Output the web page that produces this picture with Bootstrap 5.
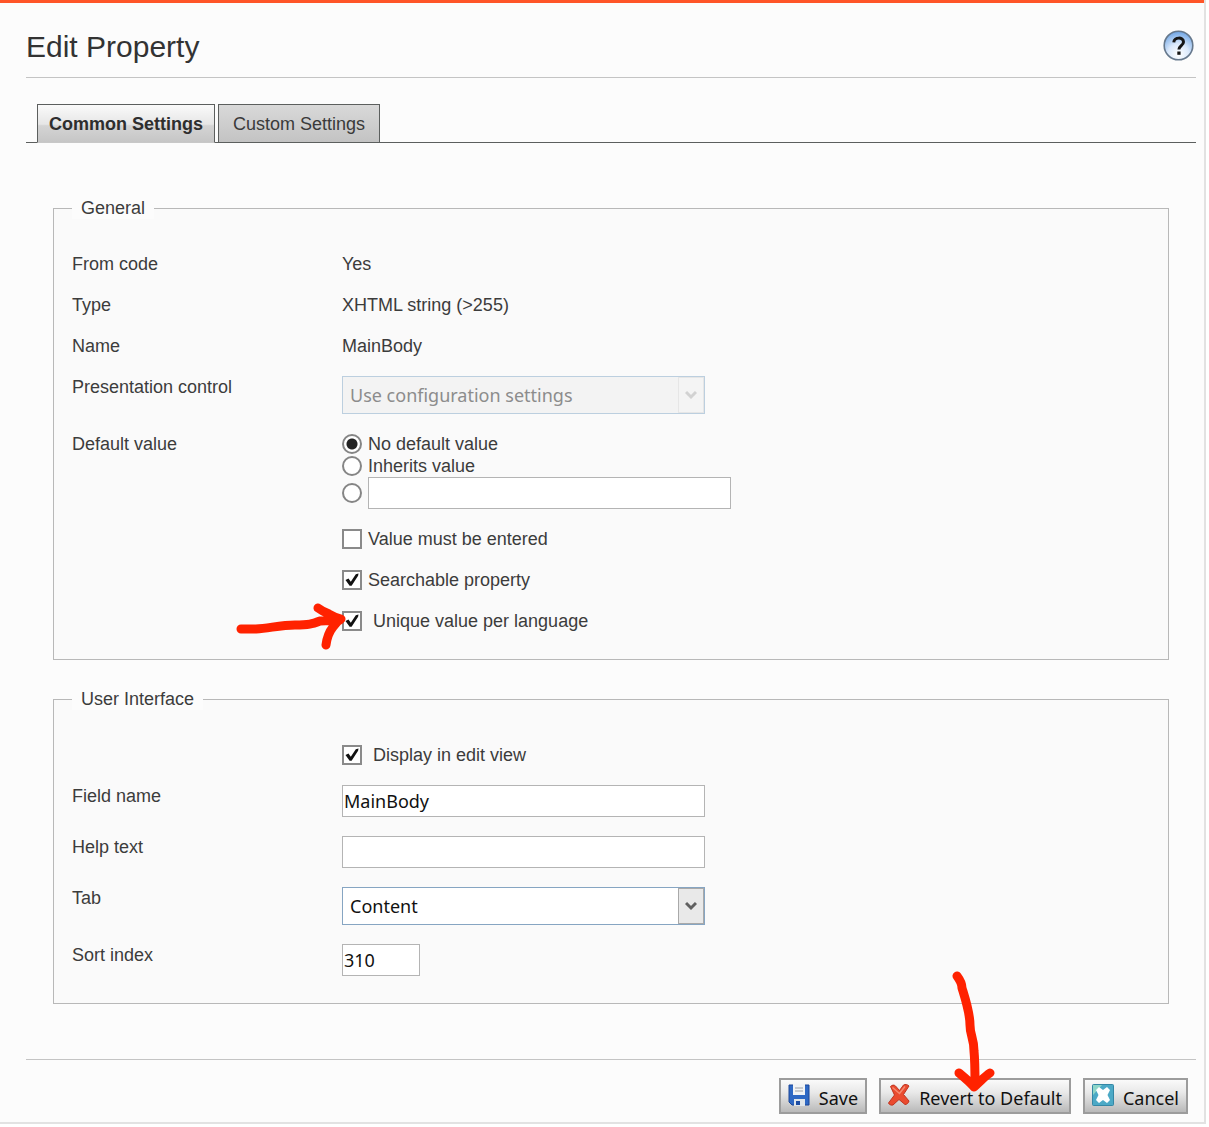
<!DOCTYPE html>
<html lang="en">
<head>
<meta charset="utf-8">
<meta name="viewport" content="width=device-width, initial-scale=1">
<title>Edit Property</title>
<link href="https://cdn.jsdelivr.net/npm/bootstrap@5.3.0/dist/css/bootstrap.min.css" rel="stylesheet">
<style>
  body { font-family: "Liberation Sans", Arial, sans-serif; font-size: 18px; line-height: 22px; color: #3c3c3c; background: #fff; }
  .dialog-panel { background: #fcfcfc; border: solid #e2e2e2; border-width: 0 2px 2px 0; margin-right: 3px; }
  .accent-bar { height: 3px; background: #ff5528; }
  .dialog-body { padding: 0 8px 8px 26px; }
  .dialog-head { padding: 26px 2px 13px 0; height: 75px; border-bottom: 1px solid #c4c4c4; }
  .dialog-title { font-size: 30px; line-height: 36px; font-weight: 400; color: #333; }
  .help-btn { line-height: 0; padding: 1px 0 0; }
  .prop-tabs { margin-top: 26px; padding-left: 11px; gap: 3px; border-bottom: 1px solid #5c5f5e; }
  .prop-tabs .nav-link { border: 1px solid #5c5f5e; border-radius: 0; margin-bottom: -1px; height: 39px; padding: 8px 14px; color: #3a3a3a; background: linear-gradient(#d9d9d9, #c3c3c3); }
  .prop-tabs .nav-link.active { padding: 8px 11px; border-bottom-color: #c8c8c8; font-weight: 700; color: #2e2e2e; background: linear-gradient(#fafafa, #e6e6e6 52%, #d4d4d4 56%, #c6c6c6); }
  .prop-groups { padding: 54px 27px 55px; display: grid; gap: 28px; }
  .prop-set { background: #fafafa; border: 1px solid #b8b8b8; padding: 34px 18px 27px; }
  .prop-legend { float: none; width: auto; font-size: 18px; line-height: 22px; padding: 0 9px; margin: 0; background: #fcfcfc; }
  .prop-rows { display: grid; grid-template-columns: 270px minmax(0, 1fr); row-gap: 19px; }
  .prop-value { grid-column: 2; }
  .choice { display: flex; align-items: center; gap: 6px; width: fit-content; position: relative; }
  .choice-wide { gap: 11px; }
  .tick { appearance: none; width: 20px; height: 20px; margin: 0; border: 2px solid #8a8a8a; background: #fff center / 16px 16px no-repeat; }
  .tick:checked { background-image: url("data:image/svg+xml,%3Csvg xmlns='http://www.w3.org/2000/svg' viewBox='0 0 16 16'%3E%3Cpath d='M1.500 8 4.500 6.500l2.300 3.200L11.800 2.200l2.700-.6-.4 2.200L7.600 13.800H5.600z' fill='%23111'/%3E%3C/svg%3E"); }
  .dot { appearance: none; width: 20px; height: 20px; margin: 0; border: 2px solid #858585; border-radius: 50%; background: #fff; }
  .dot:checked { background: radial-gradient(circle, #222 5px, #fff 6px); }
  .field { width: 363px; max-width: 100%; height: 32px; padding: 0 1px; border: 1px solid #b4b4b4; border-radius: 0; background: #fff; }
  .field, .picker, .cmd { font-family: "Noto Sans", sans-serif; font-size: 18px; line-height: 24px; color: #111; }
  .field-short { width: 78px; }
  .picker-wrap { position: relative; width: 363px; max-width: 100%; }
  .picker { appearance: none; width: 100%; height: 38px; padding: 0 30px 0 7px; border: 1px solid #86a5c2; border-radius: 0; background: #fff; }
  .picker:disabled { color: #8c8c8c; background: #f3f3f3; border-color: #bccfdf; opacity: 1; }
  .picker-arrow { position: absolute; top: 1px; right: 1px; bottom: 1px; width: 26px; display: grid; place-items: center; border: 1px solid #a9a9a9; background: #e9e9e9; color: #606060; pointer-events: none; }
  .picker:disabled + .picker-arrow { border-color: #e6e6e6; background: #f4f4f4; color: #d2d2d2; }
  .cmd-bar { border-top: 1px solid #c4c4c4; padding: 18px 8px 0 0; }
  .cmd-group { gap: 12px; }
  .cmd { display: flex; align-items: center; gap: 9px; height: 36px; padding: 3px 7px 0; border: 2px solid #9c9c9c; background: linear-gradient(#fafafa, #e8e8e8 40%, #b9b9b9); position: relative; }
  .cmd svg.glyph { margin-top: -5px; }
  .pen { position: absolute; overflow: visible; fill: none; stroke: #ff2200; stroke-width: 9; stroke-linecap: round; stroke-linejoin: round; pointer-events: none; z-index: 2; }
  .pen-tick { right: 100%; top: 0; width: 104px; height: 40px; }
  .pen-cmd { left: 71px; bottom: 18px; width: 46px; height: 120px; }
</style>
</head>
<body>
<main class="dialog-panel">
  <div class="accent-bar"></div>
  <div class="dialog-body">
    <header class="dialog-head d-flex justify-content-between align-items-start">
      <h1 class="dialog-title m-0">Edit Property</h1>
      <button type="button" class="help-btn border-0 bg-transparent" aria-label="Help">
        <svg width="31" height="31" viewBox="0 0 31 31" aria-hidden="true">
          <defs><radialGradient id="orb" cx=".5" cy=".8" r=".8"><stop offset="0" stop-color="#fff"/><stop offset=".45" stop-color="#dbe9fb"/><stop offset="1" stop-color="#6ca3e4"/></radialGradient></defs>
          <circle cx="15.500" cy="15.500" r="14.300" fill="url(#orb)" stroke="#66788c" stroke-width="1.600"/>
          <path d="M10.800 12.300c.3-5.600 9.700-5.400 9.700-.4 0 3.600-4.600 3.700-4.600 7.600" fill="none" stroke="#161616" stroke-width="3"/>
          <rect x="14.300" y="21.500" width="3.300" height="3.300" fill="#161616"/>
        </svg>
      </button>
    </header>

    <ul class="nav prop-tabs" role="tablist">
      <li class="nav-item"><a class="nav-link active" href="#common" role="tab" aria-selected="true">Common Settings</a></li>
      <li class="nav-item"><a class="nav-link" href="#custom" role="tab" aria-selected="false">Custom Settings</a></li>
    </ul>

    <form id="common">
      <div class="prop-groups">
        <fieldset class="prop-set">
          <legend class="prop-legend">General</legend>
          <div class="prop-rows">
            <div>From code</div><div>Yes</div>
            <div>Type</div><div>XHTML string (&gt;255)</div>
            <div>Name</div><div>MainBody</div>
            <label for="presentation">Presentation control</label>
            <div class="picker-wrap">
              <select id="presentation" class="picker" disabled><option>Use configuration settings</option></select>
              <span class="picker-arrow"><svg width="12" height="10" viewBox="0 0 12 10"><path d="M1 2l5 5 5-5" fill="none" stroke="currentColor" stroke-width="3"/></svg></span>
            </div>
            <div>Default value</div>
            <div>
              <label class="choice"><input class="dot" type="radio" name="default" checked>No default value</label>
              <label class="choice"><input class="dot" type="radio" name="default">Inherits value</label>
              <div class="choice">
                <input class="dot" type="radio" name="default" aria-label="Custom default value">
                <input class="field" type="text" aria-label="Default value text">
              </div>
            </div>
            <label class="prop-value choice"><input class="tick" type="checkbox">Value must be entered</label>
            <label class="prop-value choice"><input class="tick" type="checkbox" checked>Searchable property</label>
            <label class="prop-value choice choice-wide"><input class="tick" type="checkbox" checked>Unique value per language
              <svg class="pen pen-tick" viewBox="0 0 104 40" aria-hidden="true"><path d="M3 19h15c14-1 25-4 39-4 14 0 17-1 25-4 8-1 14 0 20-1M80-2c4 3 6 4 11 6 5 3 8 4 12 5-4 2-6 5-8 8-4 5-6 10-7 18"/></svg>
            </label>
          </div>
        </fieldset>

        <fieldset class="prop-set">
          <legend class="prop-legend">User Interface</legend>
          <div class="prop-rows">
            <label class="prop-value choice choice-wide"><input class="tick" type="checkbox" checked>Display in edit view</label>
            <label for="field-name">Field name</label>
            <input id="field-name" class="field" type="text" value="MainBody">
            <label for="help-text">Help text</label>
            <input id="help-text" class="field" type="text">
            <label for="tab-choice">Tab</label>
            <div class="picker-wrap">
              <select id="tab-choice" class="picker"><option>Content</option></select>
              <span class="picker-arrow"><svg width="12" height="10" viewBox="0 0 12 10"><path d="M1 2l5 5 5-5" fill="none" stroke="currentColor" stroke-width="3"/></svg></span>
            </div>
            <label for="sort-index">Sort index</label>
            <input id="sort-index" class="field field-short" type="text" value="310">
          </div>
        </fieldset>
      </div>

      <div class="cmd-bar d-flex flex-wrap justify-content-end">
        <div class="cmd-group d-flex flex-wrap">
          <button type="submit" class="cmd">
            <svg class="glyph" width="22" height="22" viewBox="0 0 22 22" aria-hidden="true">
              <path d="M1 1h20v20H4l-3-3z" fill="#2e68c4" stroke="#1c4797"/>
              <path d="M5 0h12v11H5z" fill="#f1f3f5"/><path d="M7 4h8M7 7h8" stroke="#b9bcc0" stroke-width="1.500"/>
              <path d="M6 15h11v7H6z" fill="#dfe5ea"/><path d="M8 17h4v4H8z" fill="#1d4da3"/>
            </svg>Save
          </button>
          <button type="button" class="cmd">
            <svg class="glyph" width="22" height="22" viewBox="0 0 22 22" aria-hidden="true">
              <path d="M2.500 2.500C4 1 6 .5 7.500 2l4 4.500L15.500 1c2-1 4-.5 5.500 1l-5.500 8.500L21 17c-.5 2-2 3.500-4 3.500L11 15.500l-6 5.500c-2 .5-4-.5-4.500-2L6.500 11z" fill="#ea4b2f" stroke="#bf3520"/>
              <path d="M4.500 3.500l7 6 5.500-7" fill="none" stroke="#f58a70" stroke-width="1.500"/>
            </svg>Revert to Default
            <svg class="pen pen-cmd" viewBox="0 0 46 120" aria-hidden="true"><path d="M5 2c3 4 5 8 5 12 4 13 8 25 8 37 0 11 4 13 4 26 1 10 1 22 1 34M7 99c6 5 11 9 15 14 6-5 11-11 16-14"/></svg>
          </button>
          <button type="reset" class="cmd">
            <svg class="glyph" width="22" height="22" viewBox="0 0 22 22" aria-hidden="true">
              <rect x=".5" y=".5" width="21" height="21" rx="1" fill="#4ca9c6" stroke="#3487a5"/>
              <path d="M1 1h9L1 11z" fill="#8ed6c8"/>
              <path d="M4 6l3-3 4 3 4-3 3 3-2.500 5 2.500 5-3 3-4-3-4 3-3-3 2.500-5z" fill="#fff"/>
            </svg>Cancel
          </button>
        </div>
      </div>
    </form>
  </div>
</main>
<script src="https://cdn.jsdelivr.net/npm/bootstrap@5.3.0/dist/js/bootstrap.bundle.min.js"></script>
</body>
</html>
